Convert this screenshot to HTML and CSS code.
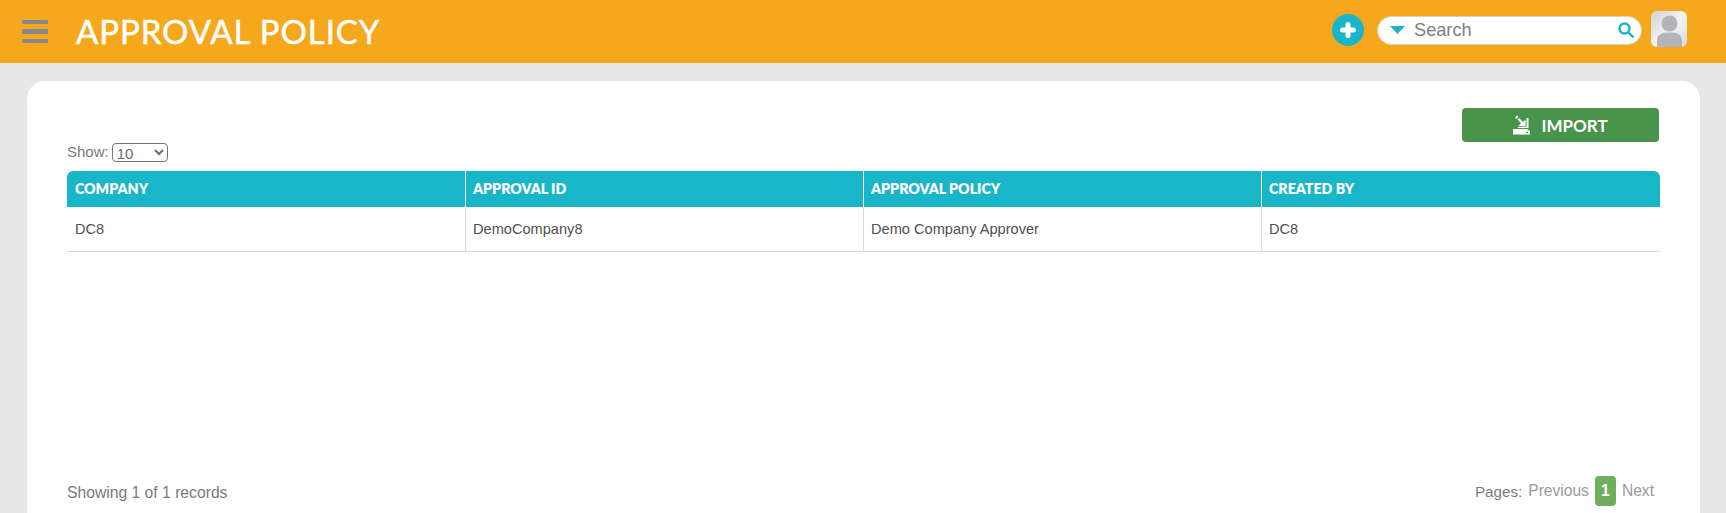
FILE: index.html
```html
<!DOCTYPE html>
<html lang="en">
<head>
<meta charset="utf-8">
<title>Approval Policy</title>
<link rel="stylesheet" href="styles.css">
</head>
<body>
<header class="topbar">
  <div class="burger"><span></span><span></span><span></span></div>
  <h1 class="title">APPROVAL POLICY</h1>
  <div class="top-tools">
    <svg class="add" width="32" height="32" viewBox="0 0 32 32"><circle cx="16" cy="16" r="16" fill="#19b5c9"/><path d="M16 10.500v11M10.500 16h11" stroke="#fff" stroke-width="5" stroke-linecap="round"/></svg>
    <div class="search">
      <svg class="caret" width="15" height="8" viewBox="0 0 15 8"><path d="M0 0h15L7.500 8z" fill="#19b5c9"/></svg>
      <span class="search-text">Search</span>
      <svg class="lens" width="16" height="16" viewBox="0 0 16 16"><circle cx="6.500" cy="6.500" r="5" fill="none" stroke="#19b5c9" stroke-width="2.400"/><path d="M10.500 10.500l5 5" stroke="#19b5c9" stroke-width="2.400"/></svg>
    </div>
    <svg class="avatar" width="36" height="36" viewBox="0 0 36 36"><defs><linearGradient id="ag" x1="0" y1="0" x2="1" y2="1"><stop offset="0" stop-color="#d2d2d4"/><stop offset="0.500" stop-color="#f2f2f3"/><stop offset="1" stop-color="#dcdcde"/></linearGradient></defs><rect width="36" height="36" rx="6" fill="url(#ag)"/><circle cx="18.500" cy="12.500" r="8" fill="#b4b5ba"/><path d="M6 36v-6c0-7 5-8.500 12.500-8.500S31 23 31 30v6z" fill="#b4b5ba"/></svg>
  </div>
</header>
<main class="card">
  <div class="actions">
    <button class="import" type="button">
      <svg width="18" height="20" viewBox="0 0 18 20"><path d="M2 2.500l2-2 1.500 1.500-2 2z" fill="#fff"/><path d="M4.500 4.500l1.500-1.500 4 4 2.500-2.500V11H5.500L8 8.500z M13.500 3H15.500V13H5v-1.200h8.500z" fill="#fff"/><path d="M0 14h14l3 2v3.500H0z" fill="#fff"/><rect x="13" y="17" width="2" height="1" fill="#47944a"/></svg>
      <span>IMPORT</span>
    </button>
  </div>
  <div class="show">
    <label for="size">Show:</label>
    <select id="size" class="size"><option>10</option></select>
  </div>
  <table class="grid">
    <thead>
      <tr><th>COMPANY</th><th>APPROVAL ID</th><th>APPROVAL POLICY</th><th>CREATED BY</th></tr>
    </thead>
    <tbody>
      <tr><td>DC8</td><td>DemoCompany8</td><td>Demo Company Approver</td><td>DC8</td></tr>
    </tbody>
  </table>
  <footer class="foot">
    <span>Showing 1 of 1 records</span>
    <nav class="pager">
      <span class="pages-label">Pages:</span>
      <span class="muted">Previous</span>
      <span class="page">1</span>
      <span class="muted">Next</span>
    </nav>
  </footer>
</main>
</body>
</html>
```
FILE: styles.css
```css
* { box-sizing: border-box; }
body {
  margin: 0;
  height: 513px;
  overflow: hidden;
  background: #e7e7e7;
  font-family: "Liberation Sans", Arial, sans-serif;
  color: #505050;
  display: flex;
  flex-direction: column;
}
.topbar {
  height: 63px;
  flex: none;
  background: #f6a81c;
  display: flex;
  align-items: center;
  padding: 0 39px 3px 22px;
}
.burger {
  width: 26px;
  display: flex;
  flex-direction: column;
  gap: 5px;
  margin: 3px 28px 0 0;
}
.burger span { display: block; height: 4.500px; border-radius: 1px; background: #84878c; }
.title {
  margin: 2px 0 0;
  font: 400 33px/1 Lato, sans-serif;
  color: #fff;
  letter-spacing: 0.92px;
  -webkit-text-stroke: 0.5px #fff;
}
.top-tools { margin-left: auto; display: flex; align-items: center; }
.add { margin-right: 13px; }
.search {
  width: 265px;
  height: 29px;
  background: #fff;
  border: 1px solid #d8d2c6;
  border-radius: 15px;
  display: flex;
  align-items: center;
  padding: 0 7px 0 12px;
  margin-right: 9px;
}
.caret { margin-right: 9px; }
.search-text { font-size: 18.200px; color: #808080; }
.lens { margin-left: auto; }
.avatar { margin-bottom: 2px; }
.card {
  flex: 1;
  margin: 18px 26px 0 27px;
  background: #fff;
  border-radius: 18px 18px 0 0;
  padding: 27px 40px 0 40px;
  display: flex;
  flex-direction: column;
}
.actions { display: flex; justify-content: flex-end; height: 24px; }
.import {
  width: 197px;
  height: 34px;
  margin-right: 1px;
  background: #47944a;
  border: 0;
  border-radius: 4px;
  color: #fff;
  font: 700 17px Lato, sans-serif;
  display: flex;
  align-items: center;
  justify-content: center;
  gap: 10px;
  padding: 0;
}
.show { height: 39px; display: flex; align-items: flex-start; gap: 3px; font-size: 15px; color: #7a7a7a; padding-top: 11px; }
.size {
  width: 56px;
  height: 19px;
  font: 15px "Liberation Sans", sans-serif;
  color: #6b6b6b;
  background: #fff;
  border: 1px solid #777;
  border-radius: 4px;
  padding: 0;
}
.grid { width: 100%; border-collapse: separate; border-spacing: 0; table-layout: fixed; }
.grid th:not(:last-child) { width: 398px; }
.grid th {
  height: 36px;
  background: #19b5c9;
  color: #fff;
  text-align: left;
  font: 800 14.200px Lato, sans-serif;
  padding: 0 7px 2px 7.500px;
  border-left: 1px solid #fff;
}
.grid th:first-child { border-left: 0; border-top-left-radius: 6px; padding-left: 8px; width: 397.500px; }
.grid th:last-child { border-top-right-radius: 6px; }
.grid td {
  height: 45px;
  font-size: 14.600px;
  color: #505050;
  padding: 0 7px 0 7.500px;
  border-bottom: 1px solid #d9d9d9;
  border-left: 1px solid #d9d9d9;
}
.grid td:first-child { border-left: 0; padding-left: 8px; }
.foot {
  margin-top: auto;
  height: 29px;
  display: flex;
  justify-content: space-between;
  align-items: flex-start;
  font-size: 15.700px;
  color: #7a7a7a;
}
.pager { display: flex; align-items: center; gap: 6px; padding-right: 6px; height: 30px; margin-top: -8px; font-size: 15.600px; }
.pages-label { font-size: 15.200px; }
.muted { color: #9a9a9a; }
.page {
  width: 21px;
  height: 30px;
  background: #6fae5a;
  color: #fff;
  font-weight: 700;
  border-radius: 4px;
  display: flex;
  align-items: center;
  justify-content: center;
}
```
